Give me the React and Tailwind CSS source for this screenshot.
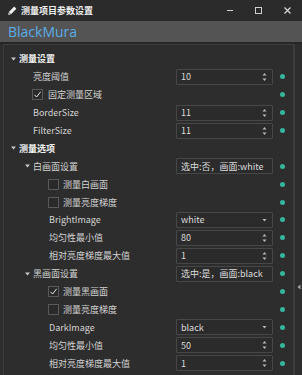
import React from 'react';

const FONT = { fontFamily: '"Noto Sans CJK SC", "Noto Sans", sans-serif' };

function Arrow() {
  return (
    <svg width="5" height="4" viewBox="0 0 5 4" className="shrink-0">
      <polygon points="0,0.5 5,0.5 2.5,3.5" fill="#c8c8c8" />
    </svg>
  );
}

function Spin() {
  return (
    <svg width="5" height="10" viewBox="0 0 5 10" className="shrink-0">
      <polygon points="0.5,3.5 4.5,3.5 2.5,1" fill="#b8b8b8" />
      <polygon points="0.5,6.5 4.5,6.5 2.5,9" fill="#b8b8b8" />
    </svg>
  );
}

function Check({ checked }) {
  return (
    <span className="w-[11px] h-[11px] border border-[#595959] bg-[#2a2a2a] flex items-center justify-center shrink-0">
      {checked && (
        <svg width="9" height="9" viewBox="0 0 9 9">
          <polyline points="1.5,4.8 3.6,7 7.6,1.8" fill="none" stroke="#e6e6e6" strokeWidth="1" />
        </svg>
      )}
    </span>
  );
}

function Editor({ kind, value }) {
  return (
    <div className="w-[97px] h-[16px] border border-[#474747] bg-[#2b2b2b] rounded-[1px] flex items-center pl-[4px] pr-[5px] text-[9px] text-[#dcdcdc]">
      <span className="flex-1 whitespace-nowrap leading-[13px]">{value}</span>
      {kind === 'spin' && <Spin />}
      {kind === 'combo' && (
        <svg width="5" height="4" viewBox="0 0 5 4" className="shrink-0">
          <polygon points="0.5,1 4.5,1 2.5,3.5" fill="#b8b8b8" />
        </svg>
      )}
    </div>
  );
}

function Row({ left, editor, dot = true }) {
  return (
    <div className="h-[17.9px] flex items-center">
      <div className="flex-1 flex items-center min-w-0">{left}</div>
      <div className="w-[97px] flex items-center">{editor}</div>
      <div className="w-[18px] flex justify-center">
        {dot && <span className="w-[5px] h-[5px] rounded-full bg-[#35b59a]" />}
      </div>
      <div className="w-[2px]" />
    </div>
  );
}

const label = 'text-[9px] text-[#d2d2d2] whitespace-nowrap leading-[13px]';

export default function App() {
  return (
    <div className="w-[302px] h-[375px] bg-[#2d2d2d] flex flex-col overflow-hidden" style={FONT}>
      {/* title bar */}
      <div className="h-[21px] bg-[#2b2b2b] flex items-center pl-[8px] pr-[11px] shrink-0">
        <svg width="9" height="9" viewBox="0 0 9 9" className="shrink-0">
          <polygon points="6.2,0.6 8.4,2.8 3,8.2 0.8,6" fill="#eeeeee" />
          <polygon points="0.6,6.4 2.6,8.4 0.2,8.8" fill="#eeeeee" />
        </svg>
        <span className="ml-[4px] text-[9px] font-bold text-[#f0f0f0] leading-[13px]">测量项目参数设置</span>
        <div className="flex-1" />
        <div className="flex items-center gap-[22px]">
          <span className="w-[6px] h-[1px] bg-[#d0d0d0]" />
          <span className="w-[7px] h-[7px] border border-[#d0d0d0]" />
          <svg width="7" height="7" viewBox="0 0 7 7">
            <path d="M0.5 0.5 L6.5 6.5 M6.5 0.5 L0.5 6.5" stroke="#d8d8d8" strokeWidth="1.2" />
          </svg>
        </div>
      </div>

      {/* header */}
      <div className="h-[23px] bg-[#545454] border-b-[2px] border-[#262626] flex items-center pl-[8px] shrink-0">
        <span className="text-[14px] text-[#5aade6] leading-[18px]" style={{ fontFamily: '"Open Sans", sans-serif' }}>
          BlackMura
        </span>
      </div>

      {/* body */}
      <div className="flex-1 flex min-h-0">
        <div className="ml-[3px] flex-1 border-l border-t border-r border-[#3e3e3e] pt-[5px]">
          <Row dot={false} left={<div className="pl-[7px] flex items-center gap-[3px]"><Arrow /><span className={label + ' font-bold text-[#f2f2f2]'}>测量设置</span></div>} />
          <Row left={<span className={'pl-[29px] ' + label}>亮度阈值</span>} editor={<Editor kind="spin" value="10" />} />
          <Row left={<div className="pl-[28px] flex items-center gap-[5px]"><Check checked /><span className={label}>固定测量区域</span></div>} />
          <Row left={<span className={'pl-[29px] ' + label}>BorderSize</span>} editor={<Editor kind="spin" value="11" />} />
          <Row left={<span className={'pl-[29px] ' + label}>FilterSize</span>} editor={<Editor kind="spin" value="11" />} />

          <Row dot={false} left={<div className="pl-[7px] flex items-center gap-[3px]"><Arrow /><span className={label + ' font-bold text-[#f2f2f2]'}>测量选项</span></div>} />
          <Row left={<div className="pl-[21px] flex items-center gap-[3px]"><Arrow /><span className={label}>白画面设置</span></div>} editor={<Editor value="选中:否，画面:white" />} />
          <Row left={<div className="pl-[44px] flex items-center gap-[4px]"><Check /><span className={label}>测量白画面</span></div>} />
          <Row left={<div className="pl-[44px] flex items-center gap-[4px]"><Check /><span className={label}>测量亮度梯度</span></div>} />
          <Row left={<span className={'pl-[45px] ' + label}>BrightImage</span>} editor={<Editor kind="combo" value="white" />} />
          <Row left={<span className={'pl-[45px] ' + label}>均匀性最小值</span>} editor={<Editor kind="spin" value="80" />} />
          <Row left={<span className={'pl-[45px] ' + label}>相对亮度梯度最大值</span>} editor={<Editor kind="spin" value="1" />} />
          <Row left={<div className="pl-[21px] flex items-center gap-[3px]"><Arrow /><span className={label}>黑画面设置</span></div>} editor={<Editor value="选中:是，画面:black" />} />
          <Row left={<div className="pl-[44px] flex items-center gap-[4px]"><Check checked /><span className={label}>测量黑画面</span></div>} />
          <Row left={<div className="pl-[44px] flex items-center gap-[4px]"><Check /><span className={label}>测量亮度梯度</span></div>} />
          <Row left={<span className={'pl-[45px] ' + label}>DarkImage</span>} editor={<Editor kind="combo" value="black" />} />
          <Row left={<span className={'pl-[45px] ' + label}>均匀性最小值</span>} editor={<Editor kind="spin" value="50" />} />
          <Row left={<span className={'pl-[45px] ' + label}>相对亮度梯度最大值</span>} editor={<Editor kind="spin" value="1" />} />
        </div>

        {/* side strip */}
        <div className="w-[8px] border-l border-[#3a3a3a] flex flex-col items-center">
          <div className="h-[240px]" />
          <svg width="4" height="6" viewBox="0 0 4 6">
            <polygon points="3.5,0.5 3.5,5.5 0.5,3" fill="#a8a8a8" />
          </svg>
        </div>
      </div>
    </div>
  );
}
